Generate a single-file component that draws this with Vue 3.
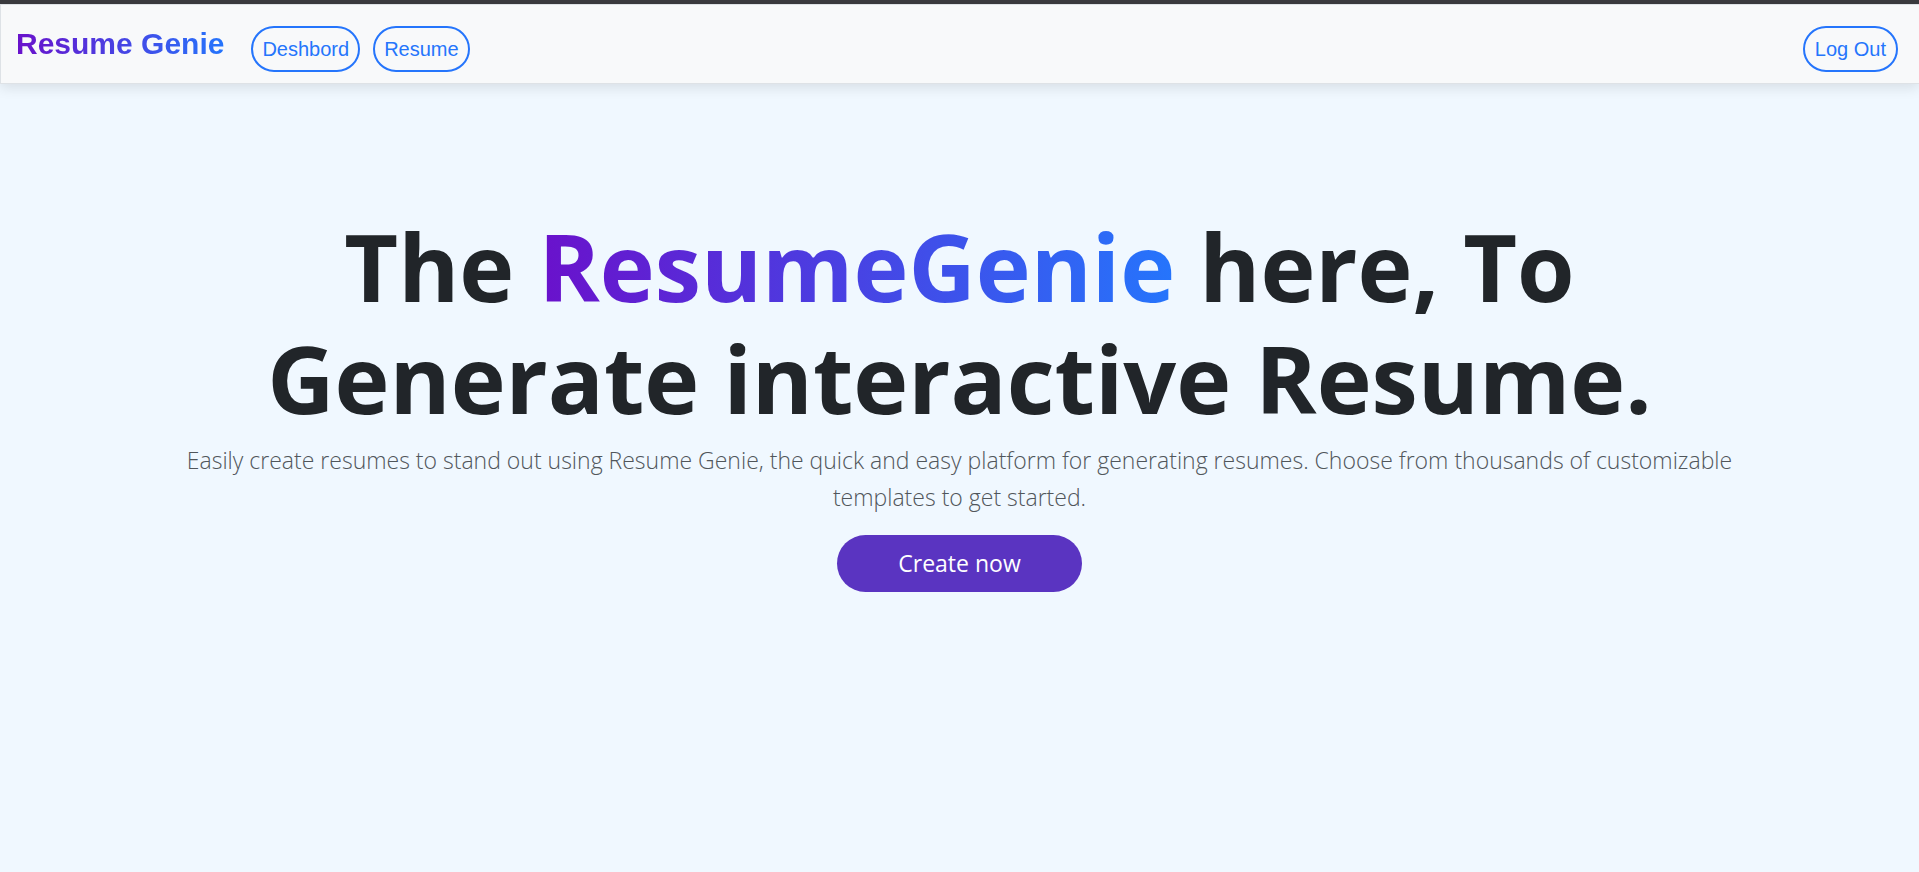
<script setup>
const links = [
  { label: 'Deshbord', href: '#dashboard' },
  { label: 'Resume', href: '#resume' }
]
</script>

<template>
  <div class="page">
    <header class="navbar">
      <a class="brand gradient" href="#home">Resume Genie</a>
      <nav class="links">
        <a v-for="link in links" :key="link.label" class="pill" :href="link.href">{{ link.label }}</a>
      </nav>
      <button class="pill logout" type="button">Log Out</button>
    </header>
    <main class="hero">
      <h1>The <span class="gradient">ResumeGenie</span> here, To<br />Generate interactive Resume.</h1>
      <p>
        Easily create resumes to stand out using Resume Genie, the quick and easy platform for
        generating resumes. Choose from thousands of customizable<br />templates to get started.
      </p>
      <button class="create" type="button">Create now</button>
    </main>
  </div>
</template>

<style>
body {
  margin: 0;
  background: #f0f8ff;
}
</style>

<style scoped>
.page {
  min-height: 100vh;
  box-sizing: border-box;
  border-top: 4px solid #3b3b3f;
  background: #f0f8ff;
  color: #212529;
  font-family: "Open Sans", "Noto Sans", sans-serif;
}
.navbar {
  display: flex;
  align-items: flex-start;
  padding: 21px 21px 11px 15px;
  border: 1px solid #dee2e6;
  border-right: 0;
  background: #f8f9fa;
  box-shadow: 0 4px 12px rgba(0, 0, 0, 0.1);
  font-family: "Liberation Sans", Arial, sans-serif;
}
.gradient {
  background: linear-gradient(to right, #6a11cb, #2575fc);
  -webkit-background-clip: text;
  background-clip: text;
  color: transparent;
}
.brand {
  font-size: 30px;
  font-weight: 700;
  line-height: 36px;
  text-decoration: none;
}
.links {
  display: flex;
  gap: 13px;
  margin-left: 27px;
}
.pill {
  box-sizing: border-box;
  height: 46px;
  padding: 0 9px;
  border: 2px solid #2575fc;
  border-radius: 23px;
  background: transparent;
  color: #2575fc;
  font-family: inherit;
  font-size: 20px;
  line-height: 42px;
  text-decoration: none;
  white-space: nowrap;
}
.logout {
  margin-left: auto;
  padding: 0 10px;
}
.hero {
  display: flex;
  flex-direction: column;
  align-items: center;
  padding: 126px 24px 24px;
  text-align: center;
}
h1 {
  margin: 0;
  font-size: 93px;
  font-weight: 700;
  line-height: 112px;
}
p {
  margin: 8px 0 19px;
  color: #50565b;
  font-size: 23px;
  font-weight: 300;
  line-height: 37px;
}
.create {
  height: 57px;
  padding: 0 61px;
  border: 0;
  border-radius: 29px;
  background: #5a34c1;
  color: #fff;
  font-family: inherit;
  font-size: 23px;
  line-height: 57px;
}
</style>
